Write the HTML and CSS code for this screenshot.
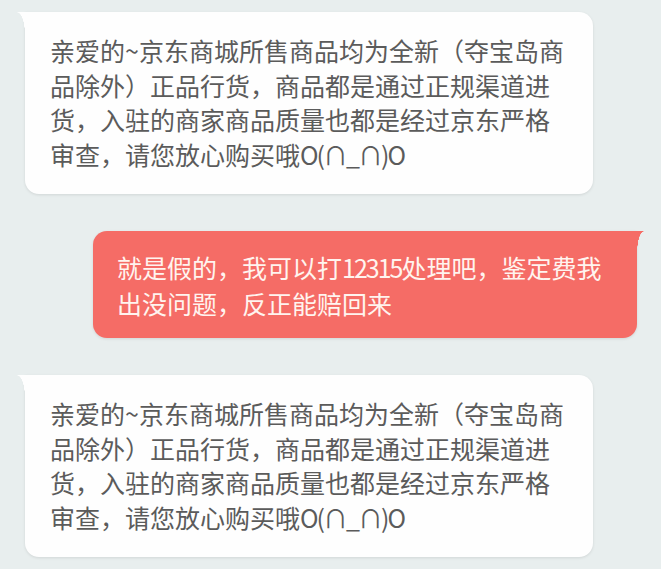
FILE: index.html
```html
<!DOCTYPE html>
<html lang="zh-CN">
<head>
<meta charset="utf-8">
<title>聊天</title>
<link rel="stylesheet" href="styles.css">
</head>
<body>
<div class="chat">
  <div class="bubble bubble-in">亲爱的~京东商城所售商品均为全新（夺宝岛商<br>品除外）正品行货，商品都是通过正规渠道进<br>货，入驻的商家商品质量也都是经过京东严格<br>审查，请您放心购买哦<span class="kaomoji">O(∩_∩)O</span></div>
  <div class="bubble bubble-out">就是假的，我可以打<span class="num">12315</span>处理吧，鉴定费我<br>出没问题，反正能赔回来</div>
  <div class="bubble bubble-in">亲爱的~京东商城所售商品均为全新（夺宝岛商<br>品除外）正品行货，商品都是通过正规渠道进<br>货，入驻的商家商品质量也都是经过京东严格<br>审查，请您放心购买哦<span class="kaomoji">O(∩_∩)O</span></div>
</div>
</body>
</html>
```
FILE: styles.css
```css
html, body {
  margin: 0;
  padding: 0;
}
body {
  background: #e8eeee;
  font-family: "Noto Sans CJK SC", "Noto Sans", sans-serif;
  width: 661px;
  height: 569px;
  overflow: hidden;
}
.chat {
  display: flex;
  flex-direction: column;
  padding-top: 12px;
  gap: 37px;
}
.bubble {
  position: relative;
  box-sizing: border-box;
  font-size: 25px;
  white-space: nowrap;
  box-shadow: 0 1px 3px rgba(0, 0, 0, 0.10);
}
.bubble-in {
  align-self: flex-start;
  margin-left: 25px;
  width: 568px;
  background: #fefefe;
  color: #5b5b5b;
  line-height: 34.5px;
  padding: 21px 20px 23px 25px;
  border-radius: 0 14px 14px 14px;
}
.bubble-in::before {
  content: "";
  position: absolute;
  left: -8px;
  top: 0;
  width: 8px;
  height: 22px;
  background: radial-gradient(ellipse 8px 22px at 0 100%, transparent 97%, #fefefe 100%);
}
.kaomoji {
  letter-spacing: -2px;
}
.num {
  letter-spacing: -2px;
}
.bubble-out {
  align-self: flex-end;
  margin-right: 24px;
  width: 544px;
  background: #f56c66;
  color: #fff4ef;
  line-height: 36px;
  padding: 18px 20px 17px 24px;
  border-radius: 14px 0 14px 14px;
}
.bubble-out::after {
  content: "";
  position: absolute;
  right: -7px;
  top: 0;
  width: 7px;
  height: 22px;
  background: radial-gradient(ellipse 7px 22px at 100% 100%, transparent 97%, #f56c66 100%);
}
```
